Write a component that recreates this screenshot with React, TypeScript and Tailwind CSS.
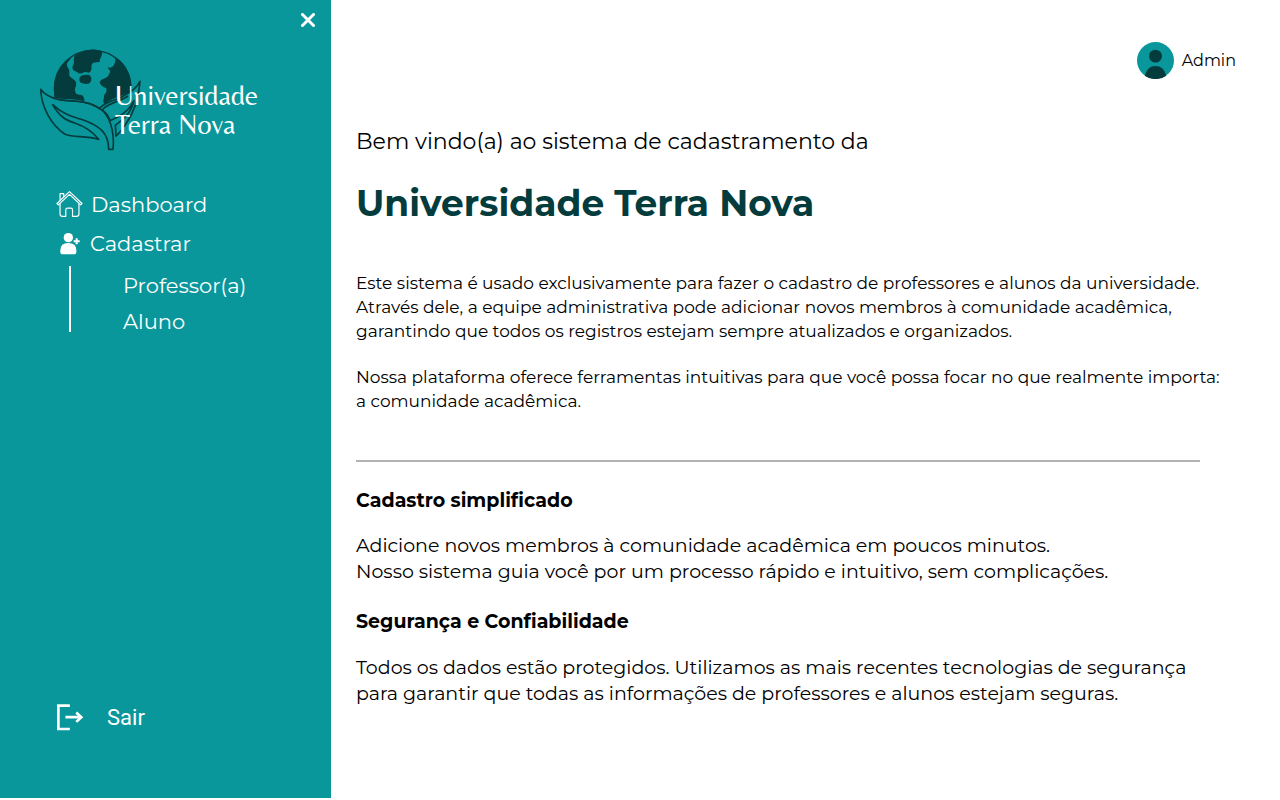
import React from "react";

function Logo() {
  return (
    <svg viewBox="0 0 360 360" className="col-start-1 row-start-1 h-[120px] w-[120px]" aria-hidden="true">
      <circle cx="188" cy="146" r="115" fill="#09979b" stroke="#043c3d" strokeWidth="4" />
      <g fill="#043c3d">
        <path d="M124 50C92 70 72 106 72 150L74 176L150 184L164 182Q163 170 156 165Q138 164 137 158Q132 152 136 144Q140 134 138 126Q134 118 124 113Q116 108 118 98Q119 88 112 80Q108 70 116 64Q122 58 124 50Z" />
        <path d="M133 48C158 28 190 24 216 34Q218 42 213 52Q208 60 209 66Q198 66 190 68Q182 74 185 82Q184 96 176 98Q168 94 162 97Q154 102 146 100Q140 94 132 92Q126 88 127 80Q134 68 131 60Z" />
        <path d="M148 118C148 106 160 104 172 104C182 104 185 112 184 120C182 130 174 133 166 132C156 132 148 128 148 118Z" />
        <path d="M256 50C292 74 308 112 304 156L250 176L222 192Q218 182 222 172Q220 164 228 158Q232 150 228 144Q212 138 209 128Q210 120 220 117Q234 112 237 103Q242 96 240 92L232 82Q242 86 250 78Q258 66 256 50Z" />
      </g>
      <path d="M32 150C64 190 120 168 166 186Q196 196 210 208Q222 192 252 182Q310 170 330 126C326 230 300 262 258 288L248 328H236C238 300 232 280 208 298C140 290 100 300 70 240Q36 200 32 150Z" fill="#09979b" />
      <g fill="none" stroke="#043c3d" strokeWidth="5" strokeLinejoin="round">
        <path d="M32 148C34 200 62 254 104 282C130 294 166 286 206 298C190 278 172 262 136 250C104 240 86 226 68 194C98 222 124 230 160 240C210 258 236 280 236 328H249C254 280 242 220 202 202C150 174 114 188 76 176C56 170 42 162 32 148Z" />
        <path d="M88 180C140 184 184 184 208 206C222 186 256 182 280 168C306 154 320 144 330 124C326 186 306 226 286 254C276 268 270 278 258 288L256 256C282 236 302 220 312 182C294 216 272 228 240 242C236 230 226 216 216 210C232 190 270 184 294 168" />
      </g>
    </svg>
  );
}

function HomeIcon() {
  return (
    <svg viewBox="0 0 80 80" className="h-[27px] w-[27px]" fill="none" stroke="currentColor" strokeWidth="3.5" strokeLinejoin="round" strokeLinecap="round" aria-hidden="true">
      <path d="M3 37L40 2L77 37L73 41L40 10L7 41Z" />
      <path d="M12 25V8H23V16M12 38V68Q12 75 19 75H29V56Q29 51 34 51H44Q49 51 49 56V75H61Q68 75 68 68V38" />
    </svg>
  );
}

function AddUserIcon() {
  return (
    <svg viewBox="0 0 60 66" className="h-[22px] w-[20px]" fill="currentColor" aria-hidden="true">
      <circle cx="25" cy="14" r="14" />
      <path d="M1 56V52Q1 30 25 30T49 52V56Q49 64 42 64H8Q1 64 1 56Z" />
      <path d="M50 16V34M41 25H59" stroke="currentColor" strokeWidth="6" />
    </svg>
  );
}

export default function App() {
  return (
    <div className="flex min-h-screen items-stretch bg-white font-['Montserrat','Inter',sans-serif] text-black">
      <aside className="mb-0.5 flex w-[331px] shrink-0 flex-col bg-[#09979b] text-white">
        <div className="flex h-10 items-center justify-end pr-4">
          <button type="button" aria-label="Fechar menu">
            <svg viewBox="0 0 14 14" className="h-3.5 w-3.5" stroke="currentColor" strokeWidth="3" strokeLinecap="round" aria-hidden="true">
              <path d="M1.500 1.500L12.500 12.500M12.500 1.500L1.500 12.500" />
            </svg>
          </button>
        </div>
        <div className="grid justify-start pl-[30px]">
          <Logo />
          <p className="col-start-1 row-start-1 pt-[41px] pl-[85px] font-['Belleza','Lato',sans-serif] text-[28px] leading-[29px] whitespace-nowrap">
            Universidade
            <br />
            Terra Nova
          </p>
        </div>
        <nav className="flex flex-col pt-[25px] pl-14 text-[21px]">
          <a href="#dashboard" className="flex h-[39px] items-center gap-2">
            <HomeIcon />
            Dashboard
          </a>
          <a href="#cadastrar" className="flex h-[39px] items-center gap-2.5 pl-1">
            <AddUserIcon />
            Cadastrar
          </a>
          <div className="flex gap-[52px] pt-[3px] pl-[13px]">
            <div className="h-[66px] w-0.5 bg-white" />
            <div className="flex flex-col pt-0.5 leading-9">
              <a href="#professor">Professor(a)</a>
              <a href="#aluno">Aluno</a>
            </div>
          </div>
        </nav>
        <a href="#sair" className="mt-auto mb-16 flex items-center gap-6 pl-14 font-['Roboto',sans-serif] text-[22px]">
          <svg viewBox="0 0 80 80" className="h-[27px] w-[27px]" fill="none" stroke="currentColor" strokeWidth="8" aria-hidden="true">
            <path d="M41 5H7V74H41M28 39H75M60 25L75 39L60 53" />
          </svg>
          Sair
        </a>
      </aside>
      <main className="min-w-0 flex-1 pr-11 pl-[25px]">
        <header className="flex items-center justify-end gap-2 pt-[42px] text-[16px]">
          <svg viewBox="0 0 110 110" className="h-[37px] w-[37px]" aria-hidden="true">
            <circle cx="55" cy="55" r="55" fill="#09979b" />
            <circle cx="55" cy="42" r="19" fill="#043c3d" />
            <path d="M23 100Q30 71 55 71T87 100A55 55 0 0 1 23 100Z" fill="#043c3d" />
          </svg>
          Admin
        </header>
        <p className="mt-[49px] text-[22px] leading-7">Bem vindo(a) ao sistema de cadastramento da</p>
        <h1 className="mt-[23px] text-[36px] leading-[48px] font-bold text-[#043c3d]">Universidade Terra Nova</h1>
        <div className="mt-11 -mr-11 flex flex-col gap-[22px] text-[17px] leading-6">
          <p>
            Este sistema é usado exclusivamente para fazer o cadastro de professores e alunos da universidade.
            <br />
            Através dele, a equipe administrativa pode adicionar novos membros à comunidade acadêmica,
            <br />
            garantindo que todos os registros estejam sempre atualizados e organizados.
          </p>
          <p>
            Nossa plataforma oferece ferramentas intuitivas para que você possa focar no que realmente importa:
            <br />a comunidade acadêmica.
          </p>
        </div>
        <hr className="mt-[47px] mr-9 border-t-2 border-[#b3b3b3]" />
        <section className="mt-[26px] text-[19px] leading-[26px]">
          <h2 className="font-bold">Cadastro simplificado</h2>
          <p className="mt-[19px]">
            Adicione novos membros à comunidade acadêmica em poucos minutos.
            <br />
            Nosso sistema guia você por um processo rápido e intuitivo, sem complicações.
          </p>
        </section>
        <section className="mt-6 text-[19px] leading-[26px]">
          <h2 className="font-bold">Segurança e Confiabilidade</h2>
          <p className="mt-5">
            Todos os dados estão protegidos. Utilizamos as mais recentes tecnologias de segurança
            <br />
            para garantir que todas as informações de professores e alunos estejam seguras.
          </p>
        </section>
      </main>
    </div>
  );
}
